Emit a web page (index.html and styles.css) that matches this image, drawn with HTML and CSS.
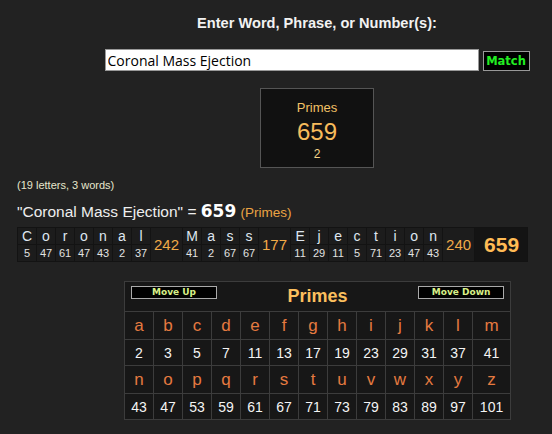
FILE: index.html
```html
<!DOCTYPE html>
<html>
<head>
<meta charset="utf-8">
<link rel="stylesheet" href="styles.css">
</head>
<body>
<div class="top">
  <div class="prompt">Enter Word, Phrase, or Number(s):</div>
  <div class="entry">
    <input class="field" type="text" value="Coronal Mass Ejection">
    <button class="match">Match</button>
  </div>
  <div class="result">
    <div class="result-name">Primes</div>
    <div class="result-value">659</div>
    <div class="result-count">2</div>
  </div>
</div>
<div class="stats">(19 letters, 3 words)</div>
<div class="equation">"Coronal Mass Ejection" = <b class="eq-total">659</b> <span class="eq-cipher">(Primes)</span></div>
<table class="breakdown">
  <tr>
    <td class="l">C</td><td class="l">o</td><td class="l">r</td><td class="l">o</td><td class="l">n</td><td class="l">a</td><td class="l">l</td>
    <td class="ws" rowspan="2">242</td>
    <td class="l">M</td><td class="l">a</td><td class="l">s</td><td class="l">s</td>
    <td class="ws" rowspan="2">177</td>
    <td class="l">E</td><td class="l">j</td><td class="l">e</td><td class="l">c</td><td class="l">t</td><td class="l">i</td><td class="l">o</td><td class="l">n</td>
    <td class="ws" rowspan="2">240</td>
    <td class="tot" rowspan="2">659</td>
  </tr>
  <tr>
    <td class="n">5</td><td class="n">47</td><td class="n">61</td><td class="n">47</td><td class="n">43</td><td class="n">2</td><td class="n">37</td>
    <td class="n">41</td><td class="n">2</td><td class="n">67</td><td class="n">67</td>
    <td class="n">11</td><td class="n">29</td><td class="n">11</td><td class="n">5</td><td class="n">71</td><td class="n">23</td><td class="n">47</td><td class="n">43</td>
  </tr>
</table>
<div class="chart-wrap">
<table class="chart">
  <colgroup>
    <col class="c"><col class="c"><col class="c"><col class="c"><col class="c"><col class="c"><col class="c"><col class="c"><col class="c"><col class="c"><col class="c"><col class="c"><col class="c-last">
  </colgroup>
  <tr>
    <td class="head" colspan="13">
      <div class="head-bar">
        <button class="move">Move Up</button>
        <span class="chart-title">Primes</span>
        <button class="move">Move Down</button>
      </div>
    </td>
  </tr>
  <tr class="letters">
    <td>a</td><td>b</td><td>c</td><td>d</td><td>e</td><td>f</td><td>g</td><td>h</td><td>i</td><td>j</td><td>k</td><td>l</td><td>m</td>
  </tr>
  <tr class="nums">
    <td>2</td><td>3</td><td>5</td><td>7</td><td>11</td><td>13</td><td>17</td><td>19</td><td>23</td><td>29</td><td>31</td><td>37</td><td>41</td>
  </tr>
  <tr class="letters">
    <td>n</td><td>o</td><td>p</td><td>q</td><td>r</td><td>s</td><td>t</td><td>u</td><td>v</td><td>w</td><td>x</td><td>y</td><td>z</td>
  </tr>
  <tr class="nums">
    <td>43</td><td>47</td><td>53</td><td>59</td><td>61</td><td>67</td><td>71</td><td>73</td><td>79</td><td>83</td><td>89</td><td>97</td><td>101</td>
  </tr>
</table>
</div>
</body>
</html>
```
FILE: styles.css
```css
* { box-sizing: border-box; }
html, body { margin: 0; padding: 0; background: #222; }
body {
  font-family: "Liberation Sans", Arial, sans-serif;
  color: #eee;
  width: 552px;
  height: 434px;
  overflow: hidden;
}
.top {
  margin-left: 82px;
  width: 470px;
  display: flex;
  flex-direction: column;
  align-items: center;
  padding-top: 14px;
}
.prompt {
  font-weight: bold;
  font-size: 14.6px;
  line-height: 18px;
  color: #f2f2f2;
}
.entry {
  display: flex;
  align-items: flex-end;
  gap: 4px;
  margin-top: 17px;
}
.field {
  width: 374px;
  height: 22px;
  border: 1px solid #999;
  background: #fff;
  color: #000;
  font-family: "Open Sans", "Noto Sans", sans-serif;
  font-size: 14px;
  padding: 0 2px;
  margin: 0;
  outline: none;
}
.match {
  width: 47px;
  height: 20px;
  background: #000;
  border: 1px solid #999;
  color: #2e2;
  font-family: "DejaVu Sans", Verdana, sans-serif;
  font-weight: bold;
  font-size: 11.5px;
  padding: 0;
  margin: 0;
}
.result {
  margin-top: 17px;
  width: 114px;
  height: 80px;
  border: 1px solid #555;
  background: #111;
  display: flex;
  flex-direction: column;
  align-items: center;
  padding-top: 11px;
}
.result-name { font-size: 13px; line-height: 15px; color: #f2c266; }
.result-value { font-size: 24px; line-height: 26px; color: #f7bb5c; margin-top: 4px; }
.result-count { font-size: 12px; line-height: 14px; color: #f5d488; margin-top: 2px; }

.stats {
  margin: 11px 0 0 17px;
  font-size: 11px;
  line-height: 13px;
  color: #e6e6cc;
}
.equation {
  margin: 10px 0 0 17px;
  font-size: 15.5px;
  line-height: 18px;
  color: #eee;
}
.eq-total {
  font-family: "DejaVu Sans", sans-serif;
  font-weight: bold;
  font-size: 17px;
  color: #fff;
}
.eq-cipher { font-size: 13.5px; color: #eba444; }

.breakdown {
  margin: 5px 0 0 17px;
  border-spacing: 1px;
  background: #131313;
}
.breakdown td {
  padding: 0;
  text-align: center;
  background: #1c1c1c;
}
.breakdown .l {
  width: 18px;
  height: 16px;
  font-size: 14px;
  line-height: 16px;
  color: #dfe6f0;
}
.breakdown .n {
  height: 16px;
  font-size: 11px;
  line-height: 16px;
  color: #e2e2e2;
}
.breakdown .ws {
  padding: 0 3px;
  font-size: 15px;
  color: #f0aa48;
}
.breakdown .tot {
  padding: 0 8px 0 9px;
  font-size: 21px;
  font-weight: bold;
  color: #ffbb55;
  background: #141414;
}

.chart-wrap { margin: 19px 0 0 124px; }
.chart {
  width: 386px;
  table-layout: fixed;
  border-collapse: collapse;
  border: 1px solid #444;
  background: #171717;
}
.chart .c { width: 29px; }
.chart .c-last { width: 38px; }
.chart td {
  border: 1px solid #3c3c3c;
  padding: 0;
  text-align: center;
}
.chart .head { height: 30px; padding: 0 6px; vertical-align: top; }
.head-bar {
  display: flex;
  justify-content: space-between;
  align-items: flex-start;
  padding-top: 4px;
}
.move {
  width: 86px;
  height: 13px;
  margin: 0;
  padding: 0;
  background: #000;
  border: 1px solid #aaa;
  color: #d8f088;
  font-family: "DejaVu Sans", Verdana, sans-serif;
  font-weight: bold;
  font-size: 9px;
  line-height: 11px;
}
.chart-title {
  font-weight: bold;
  font-size: 18px;
  line-height: 20px;
  color: #fbbf5e;
}
.letters td {
  height: 28px;
  font-size: 17px;
  color: #e57a40;
}
.nums td {
  height: 26px;
  font-size: 14px;
  color: #f4f4f4;
}
```
